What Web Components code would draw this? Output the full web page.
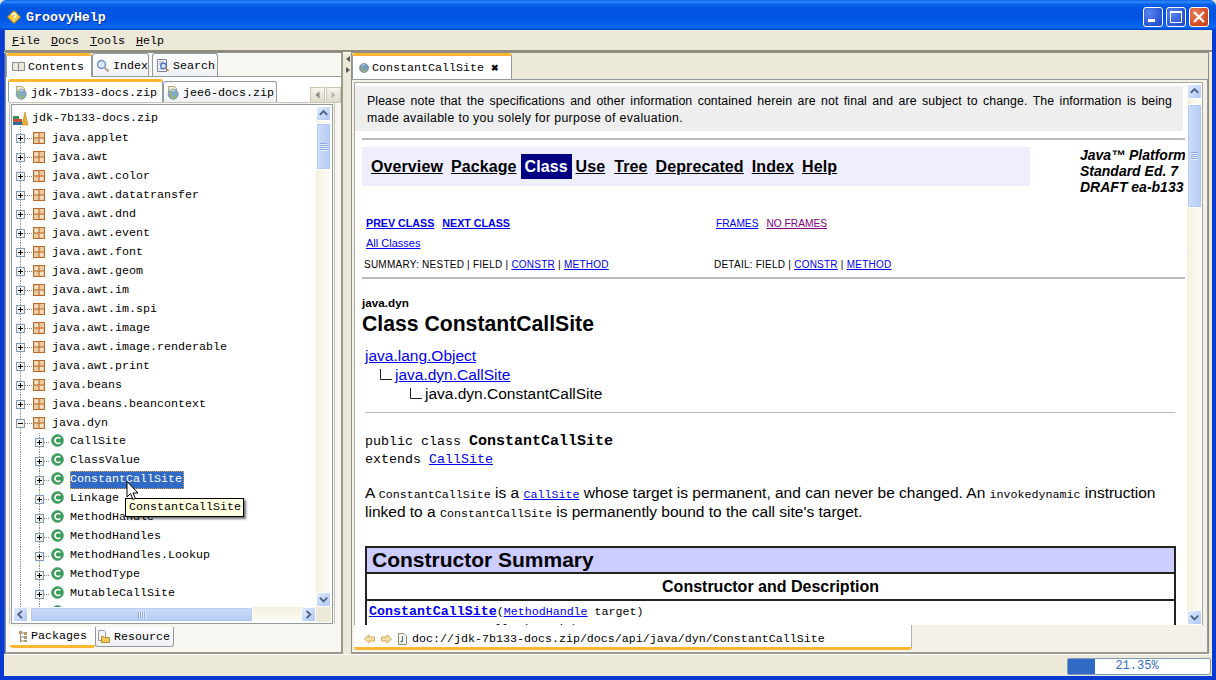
<!DOCTYPE html>
<html><head><meta charset="utf-8">
<style>
html,body{margin:0;padding:0;background:#ece9d8;overflow:hidden}
body{font-family:"Liberation Mono",monospace;font-size:11.67px;color:#000}
</style></head>
<body>
<gh-window>
  <gh-titlebar slot="title">GroovyHelp</gh-titlebar>
  <gh-menubar slot="menu"></gh-menubar>
  <gh-leftpane slot="left"></gh-leftpane>
  <gh-split slot="split"></gh-split>
  <gh-rightpane slot="right"></gh-rightpane>
  <gh-status slot="status" value="21.35%"></gh-status>
</gh-window>
<script>
const ICONS={
 book:`<svg width="13" height="13" viewBox="0 0 13 13"><path d="M.5 2.500h5.500l.5.5.5-.5h5.500v8h-5l-1 .5-1-.5h-5z" fill="#e9e6dc" stroke="#8c8c84"/><path d="M6.500 3v8" stroke="#8c8c84"/></svg>`,
 glass:`<svg width="14" height="14" viewBox="0 0 14 14"><circle cx="5.500" cy="5.500" r="4" fill="#dce8f6" stroke="#6d93c4" stroke-width="1.400"/><path d="M8.600 8.600l4 4" stroke="#b4a888" stroke-width="2.200"/></svg>`,
 search:`<svg width="14" height="15" viewBox="0 0 14 15"><path d="M1.500 1.500h9v12h-9z" fill="#f4f4fa" stroke="#7f7fa6"/><path d="M3 4h5M3 6h3M3 11h3" stroke="#9aa" /><circle cx="7.500" cy="8" r="2.800" fill="#cfe0f4" stroke="#3f6fb5" stroke-width="1.200"/><path d="M9.500 10l3 3" stroke="#d1843a" stroke-width="1.600"/></svg>`,
 zip:`<svg width="14" height="14" viewBox="0 0 14 14"><path d="M2.500 .5h6l2 2v3h-8z" fill="#f1ead2" stroke="#b6a677"/><circle cx="7.200" cy="8.200" r="5" fill="#7fa8c9" stroke="#8d9aa8"/><path d="M4 6c2-2 3 0 2 2s2 3 3 1 2 0 1 2-5 2-6 0z" fill="#8fb47f"/><path d="M5 4.500c1.500-.6 3-.4 4 .4" stroke="#e8f2fa" fill="none"/></svg>`,
 globe:`<svg width="10" height="10" viewBox="0 0 10 10"><circle cx="5" cy="5" r="4.500" fill="#6f9ac0" stroke="#7e8a96" stroke-width=".8"/><path d="M2 4c1.500-2 3 0 2 1.500s2 2 3 .5 1.500.5.5 2-4.500 1-5.500-1z" fill="#8fb07a"/><path d="M3 2.200c1.200-.6 2.200-.5 3 .1" stroke="#eef" fill="none" stroke-width=".8"/></svg>`,
 pkgtab:`<svg width="10" height="13" viewBox="0 0 10 13"><path d="M2.500 1v11M2.500 3h4M2.500 7h4M2.500 11h4" stroke="#8a8a80"/><path d="M1 1h3v3H1zM6 2h3v3H6zM6 6h3v3H6zM6 10h3v2H6z" fill="#b79a6a"/></svg>`,
 res:`<svg width="14" height="14" viewBox="0 0 14 14"><path d="M1.500 .5h6l1 1v9h-7z" fill="#f6f6f6" stroke="#9c9c9c"/><path d="M4.500 6.500h2l1 1h5v5h-8z" fill="#f2c85a" stroke="#b98d2b"/></svg>`,
 page:`<svg width="9" height="12" viewBox="0 0 9 12"><path d="M.5.500h5.500l2.500 2.500v8.500h-8z" fill="#f5f3e6" stroke="#8e8e80"/><path d="M4.500 3v5.500" stroke="#4a6fa5"/><path d="M4.500 8.500a1 1 0 1 1-2 0 1 1 0 0 1 2 0z" fill="#4a6fa5"/></svg>`
};

class Base extends HTMLElement{
  constructor(){super();this.attachShadow({mode:'open'});}
  connectedCallback(){this.shadowRoot.innerHTML=this.render();}
}
function def(n,c){customElements.define(n,c);}

def('gh-window',class extends Base{render(){return `<style>
:host{display:flex;flex-direction:column;width:1216px;height:680px;background:#ece9d8;overflow:hidden;position:relative}
.mid{flex:1;display:flex;flex-direction:column;border-left:4px solid #0a3bd0;border-right:4px solid #0a3bd0;border-bottom:4px solid #0a3bd0;min-height:0;box-shadow:inset 1px 0 #2a5ce0}
.work{display:flex;height:602px;padding-left:1px;box-sizing:border-box}
</style>
<slot name="title"></slot>
<div class="mid">
 <slot name="menu"></slot>
 <div class="work"><slot name="left"></slot><slot name="split"></slot><slot name="right"></slot></div>
 <slot name="status"></slot>
</div>`}});

def('gh-split',class extends Base{render(){return `<style>
:host{display:flex;flex-direction:column;align-items:flex-end;width:8px;flex:none;box-sizing:border-box;padding:4px 1px 0 0;gap:5px}
svg{display:block}
</style><svg width="4" height="6" viewBox="0 0 4 6"><path d="M4 0v6L0 3z" fill="#555"/></svg><svg width="4" height="6" viewBox="0 0 4 6"><path d="M0 0v6l4-3z" fill="#555"/></svg>`}});

def('gh-titlebar',class extends Base{render(){return `<style>
:host{display:flex;align-items:center;height:30px;box-sizing:border-box;padding:4px 7px 0 7px;
background:linear-gradient(180deg,#0a5fe6 0,#2f8cfb 2px,#0b62ea 4px,#0256e0 8px,#0055e5 18px,#0562ee 25px,#0a6af0 27px,#0244c8 30px);
border-radius:6px 6px 0 0;color:#fff;font:bold 13.3px "Liberation Mono",monospace;text-shadow:1px 1px 0 #0a2f9e}
.t{margin-left:5px;flex:1}
.b{width:20px;height:20px;box-sizing:border-box;border:1px solid #fff;border-radius:3px;margin-left:3px;display:block;background:radial-gradient(circle at 30% 30%,#5a86ee,#2a55d4 70%,#2048c0)}
.b.c{background:radial-gradient(circle at 30% 30%,#e9805e,#d4481f 70%,#c03a14)}
.bs{display:flex}
</style>
<svg width="14" height="14" viewBox="0 0 14 14"><path d="M7 .5L13.500 7 7 13.500.5 7z" fill="#f7c332" stroke="#b98a1a"/><path d="M5 5.400c0-2.400 4-2.400 4 0 0 1.600-2 1.400-2 2.900M7 9.500v1.300" stroke="#fff" stroke-width="1.500" fill="none"/></svg>
<span class="t"><slot></slot></span>
<div class="bs">
 <svg class="b" viewBox="0 0 18 18"><rect x="4" y="11" width="7" height="3" fill="#fff"/></svg>
 <svg class="b" viewBox="0 0 18 18"><path d="M3.500 3.500h11v11h-11z" fill="none" stroke="#fff"/><path d="M3 4h12" stroke="#fff" stroke-width="2"/></svg>
 <svg class="b c" viewBox="0 0 18 18"><path d="M4 4l10 10M14 4L4 14" stroke="#fff" stroke-width="2.200"/></svg>
</div>`}});

def('gh-menubar',class extends Base{render(){const m=[['F','ile',11],['D','ocs',11],['T','ools',11],['H','elp',0]];
return `<style>
:host{display:flex;height:22px;box-sizing:border-box;padding:3px 0 0 8px;border-bottom:2px solid #8f8d80;color:#000;line-height:17px;box-shadow:0 1px #fff}
u{text-decoration:underline}
</style>${m.map(x=>`<span style="margin-right:${x[2]}px"><u>${x[0]}</u>${x[1]}</span>`).join('')}`}});

def('gh-tab',class extends Base{render(){const a=this.hasAttribute('active'),b=this.hasAttribute('bottom');
return `<style>
:host{display:flex;align-items:center;gap:3px;box-sizing:border-box;padding:${this.getAttribute('pt')||0}px 0 0 ${this.getAttribute('pl')||5}px;white-space:nowrap;height:${this.getAttribute('h')||24}px;
width:${this.getAttribute('w')}px;margin-left:${this.getAttribute('ml')||0}px;flex:none;
background:${a?'#fff':'linear-gradient(#fff,#eef0f5)'};
${b?`border:1px solid #919b9c;border-top:0;border-radius:0 0 3px 3px;${a?'border:0;border-bottom:3px solid #ffb733;border-radius:0 0 3px 3px;background:#fff;':''}`:
`border:1px solid #919b9c;border-bottom:0;border-radius:3px 3px 0 0;${a?'border-top:3px solid #ffb733;position:relative;z-index:1;':''}`}}
svg{flex:none;display:block}
</style>${ICONS[this.getAttribute('icon')]||''}<span><slot></slot></span>`}});

def('gh-scroll',class extends Base{render(){
 const h=this.getAttribute('dir')==='h',s=+this.getAttribute('start'),t=+this.getAttribute('thumb');
 const chev=(d)=>{const p={up:'M3 8.500l4-4 4 4',down:'M3 5l4 4 4-4',left:'M8.500 3l-4 4 4 4',right:'M5 3l4 4-4 4'}[d];return `<svg class="btn" viewBox="0 0 14 14"><path d="${p}" fill="none" stroke="#4d6185" stroke-width="2"/></svg>`};
 return `<style>
:host{display:flex;flex:none;flex-direction:${h?'row':'column'};${h?'height':'width'}:15px;background:${h?'linear-gradient(#f3f1dc,#fdfdfa)':'linear-gradient(90deg,#f3f1dc,#fdfdfa)'}}
.btn{width:15px;height:15px;flex:none;box-sizing:border-box;border:1px solid #fff;border-radius:2px;background:linear-gradient(135deg,#e1eafe,#aec8f7);display:block}
.th{${h?'width':'height'}:${t}px;margin-${h?'left':'top'}:${s}px;box-sizing:border-box;border:1px solid #fff;border-radius:2px;background:${h?'linear-gradient(#cfdcf8,#b5ccf7)':'linear-gradient(90deg,#cfdcf8,#b5ccf7)'};display:flex;align-items:center;justify-content:center;box-shadow:0 0 0 .5px #a7bfe9 inset}
.gr{${h?'width:8px;height:6px;background:repeating-linear-gradient(90deg,#8ea8dc 0 1px,#e6eefd 1px 2px)':'width:7px;height:8px;background:repeating-linear-gradient(#8ea8dc 0 1px,#e6eefd 1px 2px)'}}
.sp{flex:1}
</style>${chev(h?'left':'up')}<div class="th"><div class="gr"></div></div><div class="sp"></div>${chev(h?'right':'down')}`}});

def('gh-node',class extends Base{render(){
 const k=this.getAttribute('kind'),sel=this.hasAttribute('selected'),open=this.hasAttribute('open');
 let g='',w=40;
 const dot=(d)=>`<path d="${d}" stroke="#8a8a8a" stroke-dasharray="1 1" fill="none"/>`;
 const exp=(x,y)=>`<rect x="${x+.5}" y="${y+.5}" width="8" height="8" fill="#f2f0e6" stroke="#7f9db9"/><path d="M${x+2} ${y+4.500}h5${open?'':`M${x+4.500} ${y+2}v5`}" stroke="#000"/>`;
 if(k==='root'){w=20;g=`${dot('M8.500 17v2')}
  <path d="M1 6h4v9H1z" fill="#2d7f6f"/><path d="M1 9h9v3H1z" fill="#c94f3a"/><path d="M1 12h11v3H1z" fill="#2f6a9d"/><path d="M1 6h6v3H1z" fill="#3a8f55"/><path d="M10 15l3-13 3 13z" fill="#e9b234" stroke="#c08a1a" stroke-width=".6"/>`;}
 if(k==='pkg'){g=`${dot('M8.500 0V19')}${dot('M13 9.500h8')}${exp(4,5)}
  <g transform="translate(21,3)"><rect x=".5" y=".5" width="11" height="11" fill="#ecc9a0" stroke="#b96a2a"/><path d="M6 .5v11M.5 6h11" stroke="#b96a2a"/><path d="M2 2h3v3H2zM7 7h3v3H7z" fill="#f5e2c8"/></g>`;}
 if(k==='cls'){w=58;g=`${dot('M8.500 0V19')}${dot('M27.500 0V19')}${dot('M32 9.500h6')}${exp(23,5)}
  <g transform="translate(39,1)"><circle cx="6.500" cy="6.500" r="6" fill="#3d9b5b" stroke="#5aa878" stroke-width=".8"/><circle cx="6.500" cy="5.500" r="3.600" fill="#3d9b5b"/><path d="M9.200 4.500a3 3 0 1 0 0 4" stroke="#fff" stroke-width="1.700" fill="none"/></g>`;}
 return `<style>
:host{display:flex;height:19px;align-items:center;white-space:nowrap;flex:none}
svg{flex:none;display:block}
.l{height:18px;line-height:17px;box-sizing:border-box;${k==='cls'?'margin-bottom:2px;':k==='root'?'margin-bottom:1px;':''}${sel?'padding-right:2px;background:#316ac5;color:#fff;outline:1px dotted #d8a050;outline-offset:-1px;':''}}
</style><svg width="${w}" height="19">${g}</svg><span class="l"><slot></slot></span>`}});

def('gh-tree',class extends Base{render(){
 const p='applet awt awt.color awt.datatransfer awt.dnd awt.event awt.font awt.geom awt.im awt.im.spi awt.image awt.image.renderable awt.print beans beans.beancontext'.split(' ');
 const c='CallSite ClassValue ConstantCallSite Linkage MethodHandle MethodHandles MethodHandles.Lookup MethodType MutableCallSite SwitchPoint'.split(' ');
 return `<style>
:host{display:flex;flex-direction:column;flex:1;min-height:0;overflow:hidden;background:#fff;padding-top:4px;position:relative}
</style>
<gh-node kind="root">jdk-7b133-docs.zip</gh-node>
${p.map(x=>`<gh-node kind="pkg">java.${x}</gh-node>`).join('')}
<gh-node kind="pkg" open>java.dyn</gh-node>
${c.map(x=>`<gh-node kind="cls"${x==='ConstantCallSite'?' selected':''}>${x}</gh-node>`).join('')}`}});

def('gh-leftpane',class extends Base{render(){return `<style>
:host{display:flex;flex-direction:column;box-sizing:border-box;width:338px;height:602px;border:1px solid #8f8f88;border-right:2px solid #9a9a90;border-bottom:2px solid #9a9a90;position:relative;background:#f7f6f0;box-shadow:inset 0 0 0 1px #fff}
.t1{display:flex;height:24px;flex:none}
.panel{flex:1;display:flex;flex-direction:column;border-top:1px solid #919b9c;background:#fff;min-height:0;margin-top:-1px;padding-top:2px}
.t2{display:flex;flex:none;height:23px;padding-left:2px;align-items:flex-end;position:relative}
.arrows{margin-left:auto;display:flex;gap:1px;margin-bottom:-1px}
.arrows svg{display:block;width:15px;height:16px;background:linear-gradient(#f7f6f0,#ddd9c6);box-shadow:inset 0 0 0 1px #c9c5b2}
.bx{flex:1;display:flex;flex-direction:column;margin:2px 8px 0 5px;border:1px solid #919b9c;outline:1px solid #c4c4bc;outline-offset:1px;min-height:0;background:#fff;padding:1px 1px 1px 0}
.v{flex:1;display:flex;min-height:0}
.hs{display:flex;flex:none;padding-left:1px}
.corner{width:15px;background:#ece9d8;flex:none}
.t3{display:flex;height:24px;flex:none;padding:3px 0 1px 4px;background:#f7f6f0}
gh-scroll[dir=h]{flex:1}
.wrap{flex:1;display:flex;flex-direction:column;min-height:0;background:#f7f6f0}
</style>
<div class="t1">
 <gh-tab active w="86" icon="book">Contents</gh-tab>
 <gh-tab w="57" pl="3" icon="glass">Index</gh-tab>
 <gh-tab w="66" ml="3" pl="3" icon="search">Search</gh-tab>
</div>
<div class="panel">
 <div class="t2">
  <gh-tab active w="155" h="23" pt="1" icon="zip">jdk-7b133-docs.zip</gh-tab>
  <gh-tab w="114" h="21" pt="1" pl="2" icon="zip">jee6-docs.zip</gh-tab>
  <div class="arrows">
   <svg viewBox="0 0 15 16"><path d="M9.500 4.500v7l-4-3.500z" fill="#8a8a80"/></svg>
   <svg viewBox="0 0 15 16"><path d="M5.500 4.500v7l4-3.500z" fill="#b8b8ac"/></svg>
  </div>
 </div>
 <div class="wrap">
 <div class="bx">
  <div class="v"><gh-tree></gh-tree><gh-scroll dir="v" start="2" thumb="47"></gh-scroll></div>
  <div class="hs"><gh-scroll dir="h" start="2" thumb="223"></gh-scroll><div class="corner"></div></div>
 </div>
 <div class="t3">
  <gh-tab bottom active w="85" h="21" pl="8" icon="pkgtab">Packages</gh-tab>
  <gh-tab bottom w="79" h="20" pl="1" icon="res">Resource</gh-tab>
 </div>
 </div>
</div>
<gh-tooltip></gh-tooltip>`}});

def('gh-tooltip',class extends Base{render(){return `<style>
:host{position:absolute;left:119px;top:445px;width:119px;height:19px;box-sizing:border-box;background:#ffffe1;border:1px solid #000;padding-left:3px;line-height:17px;box-shadow:2px 2px 2px rgba(0,0,0,.55);z-index:5}
svg{position:absolute;left:0;top:-18px}
</style>ConstantCallSite<svg width="14" height="21" viewBox="0 0 14 21"><path d="M1 .5v15.500l3.500-3.500 2.500 6 2.500-1-2.500-5.500h5z" fill="#fff" stroke="#000"/></svg>`}});

def('gh-rightpane',class extends Base{render(){return `<style>
:host{display:flex;flex-direction:column;box-sizing:border-box;width:858px;height:602px;border:1px solid #8f8f88;border-right:0;border-bottom:2px solid #9a9a90;background:#ece9d8;box-shadow:inset -1px 0 #8f8f88}
.t{display:flex;height:27px;flex:none;box-sizing:border-box;border-bottom:1px solid #919b9c}
.x{font:bold 9px "Liberation Sans",sans-serif;margin-left:7px}
.p{flex:1;display:flex;flex-direction:column;min-height:0;background:#f3f1ea;padding:2px 4px 2px 2px;margin-right:1px;border-right:1px solid #9a9a90}
.f{flex:1;display:flex;min-height:0;border-top:1px solid #a8a8a0;border-left:1px solid #a8a8a0;border-right:1px solid #a8a8a0;background:#fff;padding-top:1px}
gh-scroll{margin-left:2px}
</style>
<div class="t"><gh-tab active w="160" h="26" pl="6" icon="globe">ConstantCallSite<span class="x">✖</span></gh-tab></div>
<div class="p">
 <div class="f"><gh-doc></gh-doc><gh-scroll dir="v" start="5" thumb="104"></gh-scroll></div>
 <gh-address></gh-address>
</div>`}});

def('gh-address',class extends Base{render(){return `<style>
:host{display:flex;flex:none;align-items:center;height:25px;width:558px;box-sizing:border-box;padding:5px 0 0 10px;background:#fff;border-bottom:3px solid #ffb733;border-right:1px solid #b0b0a8;border-radius:0 0 3px 3px;gap:6px;white-space:nowrap}
svg{display:block;flex:none}
</style>
<svg width="11" height="10" viewBox="0 0 11 10"><path d="M.5 5L5 .8V3h5.500v4H5v2.200z" fill="#f5dfa8" stroke="#d9a857"/></svg>
<svg width="11" height="10" viewBox="0 0 11 10"><path d="M10.500 5L6 .8V3H.5v4H6v2.200z" fill="#f5dfa8" stroke="#d9a857"/></svg>
${ICONS.page}<span style="margin-left:-1px">doc://jdk-7b133-docs.zip/docs/api/java/dyn/ConstantCallSite</span>`}});

def('gh-doc',class extends Base{render(){return `<style>
:host{display:block;flex:1;min-width:0;overflow:hidden;font:15.5px/19px "Liberation Sans",sans-serif;color:#000;background:#fff;box-sizing:border-box;padding-top:2px}
a{color:#00e;text-decoration:underline}
.note{background:#eee;font-size:12.3px;line-height:17px;letter-spacing:.35px;padding:7px 11px 4px 12px;height:45px;box-sizing:border-box;margin-right:2px;white-space:nowrap}
.note .j{white-space:normal;text-align:justify;text-align-last:justify;letter-spacing:.1px}
.pad{padding-left:7px}
hr{border:0;background:#bbb;height:2px;margin:0}
.navr{display:flex;margin-top:7px;height:47px}
.nav{width:668px;height:39px;background:#eef;display:flex;align-items:center;box-sizing:border-box;padding-left:9px;font:bold 16px "Liberation Sans",sans-serif;flex:none;letter-spacing:.1px}
.nav a{color:#000;margin-right:8px}
.nav b{background:#000080;color:#fff;width:51px;height:25px;display:flex;align-items:center;justify-content:center;margin:0 4px 0 0}
.nav a:nth-child(2){margin-right:4px}
.nav a:nth-child(4){margin-right:9px}
.ver{margin-left:50px;font:italic bold 14px/16px "Liberation Sans",sans-serif;white-space:nowrap}
.row{display:flex;font-size:11px;line-height:13px}
.row a{white-space:nowrap}
.sm{font-size:10px;letter-spacing:.24px;white-space:nowrap}
.ln{margin-left:3px}
h4{font:bold 11.7px/14px "Liberation Sans",sans-serif;margin:17px 0 0}
h2{font:bold 21.2px/24px "Liberation Sans",sans-serif;margin:2px 0 0}
.h{margin:10px 0 0 3px}
.h div{height:19px;white-space:nowrap;display:flex;align-items:center}
.h svg{flex:none;display:block}
hr.th{height:1px;margin:9px 10px 0 3px;background:#bbb}
.decl{margin:20px 0 0 3px;font:13.33px/18px "Liberation Mono",monospace}
.decl b{font-size:15px}
.p{margin:14px 10px 0 3px}
code{font:11.67px "Liberation Mono",monospace}
table{border-collapse:collapse;width:811px;margin:25px 0 0 3px;border:2px solid #222;table-layout:fixed}
td,th{border:2px solid #222;padding:0}
.t1{background:#ccf;font:bold 21px/24px "Liberation Sans",sans-serif;text-align:left;padding:0 0 0 5px}
.t2{font:bold 16px/25px "Liberation Sans",sans-serif;text-align:center}
.t3{font:11.67px/17px "Liberation Mono",monospace;padding:2px 2px 0;height:60px;vertical-align:top;white-space:pre}
.t3 b{font-size:13.3px}
</style>
<div class="note"><div class="j">Please note that the specifications and other information contained herein are not final and are subject to change. The information is being</div><div>made available to you solely for purpose of evaluation.</div></div>
<div class="pad">
<hr style="margin-top:7px">
<div class="navr">
 <div class="nav"><a>Overview</a><a>Package</a><b>Class</b><a>Use</a><a>Tree</a><a>Deprecated</a><a>Index</a><a>Help</a></div>
 <div class="ver">Java™ Platform<br>Standard Ed. 7<br>DRAFT ea-b133</div>
</div>
<div class="row ln" style="margin-top:23px"><div style="margin-left:1px;width:349px;font-size:10.7px"><a style="font-weight:700">PREV CLASS</a><a style="font-weight:700;margin-left:8px">NEXT CLASS</a></div><div style="margin-left:1px;font-size:10.2px"><a>FRAMES</a><a style="color:#800080;margin-left:8px">NO FRAMES</a></div></div>
<div class="row ln" style="margin-top:7px;margin-left:4px"><a>All Classes</a></div>
<div class="row sm" style="margin-top:8px;margin-left:2px"><div style="width:350px">SUMMARY: NESTED | FIELD | <a>CONSTR</a> | <a>METHOD</a></div><div>DETAIL: FIELD | <a>CONSTR</a> | <a>METHOD</a></div></div>
<hr style="margin-top:6px">
<h4>java.dyn</h4>
<h2>Class ConstantCallSite</h2>
<div class="h">
 <div><a>java.lang.Object</a></div>
 <div style="padding-left:15px"><svg width="15" height="16" viewBox="0 0 15 16"><path d="M.5 2v10.500H12" fill="none" stroke="#222"/></svg><a>java.dyn.CallSite</a></div>
 <div style="padding-left:45px"><svg width="15" height="16" viewBox="0 0 15 16"><path d="M.5 2v10.500H12" fill="none" stroke="#222"/></svg>java.dyn.ConstantCallSite</div>
</div>
<hr class="th">
<div class="decl">public class <b>ConstantCallSite</b><br>extends <a>CallSite</a></div>
<div class="p">A <code>ConstantCallSite</code> is a <a><code>CallSite</code></a> whose target is permanent, and can never be changed. An <code>invokedynamic</code> instruction linked to a <code>ConstantCallSite</code> is permanently bound to the call site's target.</div>
<table>
<tr><th class="t1">Constructor Summary</th></tr>
<tr><th class="t2">Constructor and Description</th></tr>
<tr><td class="t3"><a><b>ConstantCallSite</b></a>(<a>MethodHandle</a> target)
      Creates a call site with a permanent target.</td></tr>
</table>
</div>`}});

def('gh-status',class extends Base{render(){return `<style>
:host{display:flex;justify-content:flex-end;flex:1;box-sizing:border-box;padding:4px 1px 0 0;background:#ece9d8;box-shadow:inset 0 1px #fff;min-height:0}
.b{width:144px;height:17px;box-sizing:border-box;border:1px solid #7f9db9;background:#fff;border-radius:2px;position:relative;text-align:center;color:#316ac5;line-height:15px;font-size:12px;padding-right:4px}
.f{position:absolute;left:0;top:0;bottom:0;width:27px;background:#316ac5}
</style><div class="b"><div class="f"></div>${this.getAttribute('value')}</div>`}});
</script>
</body></html>
